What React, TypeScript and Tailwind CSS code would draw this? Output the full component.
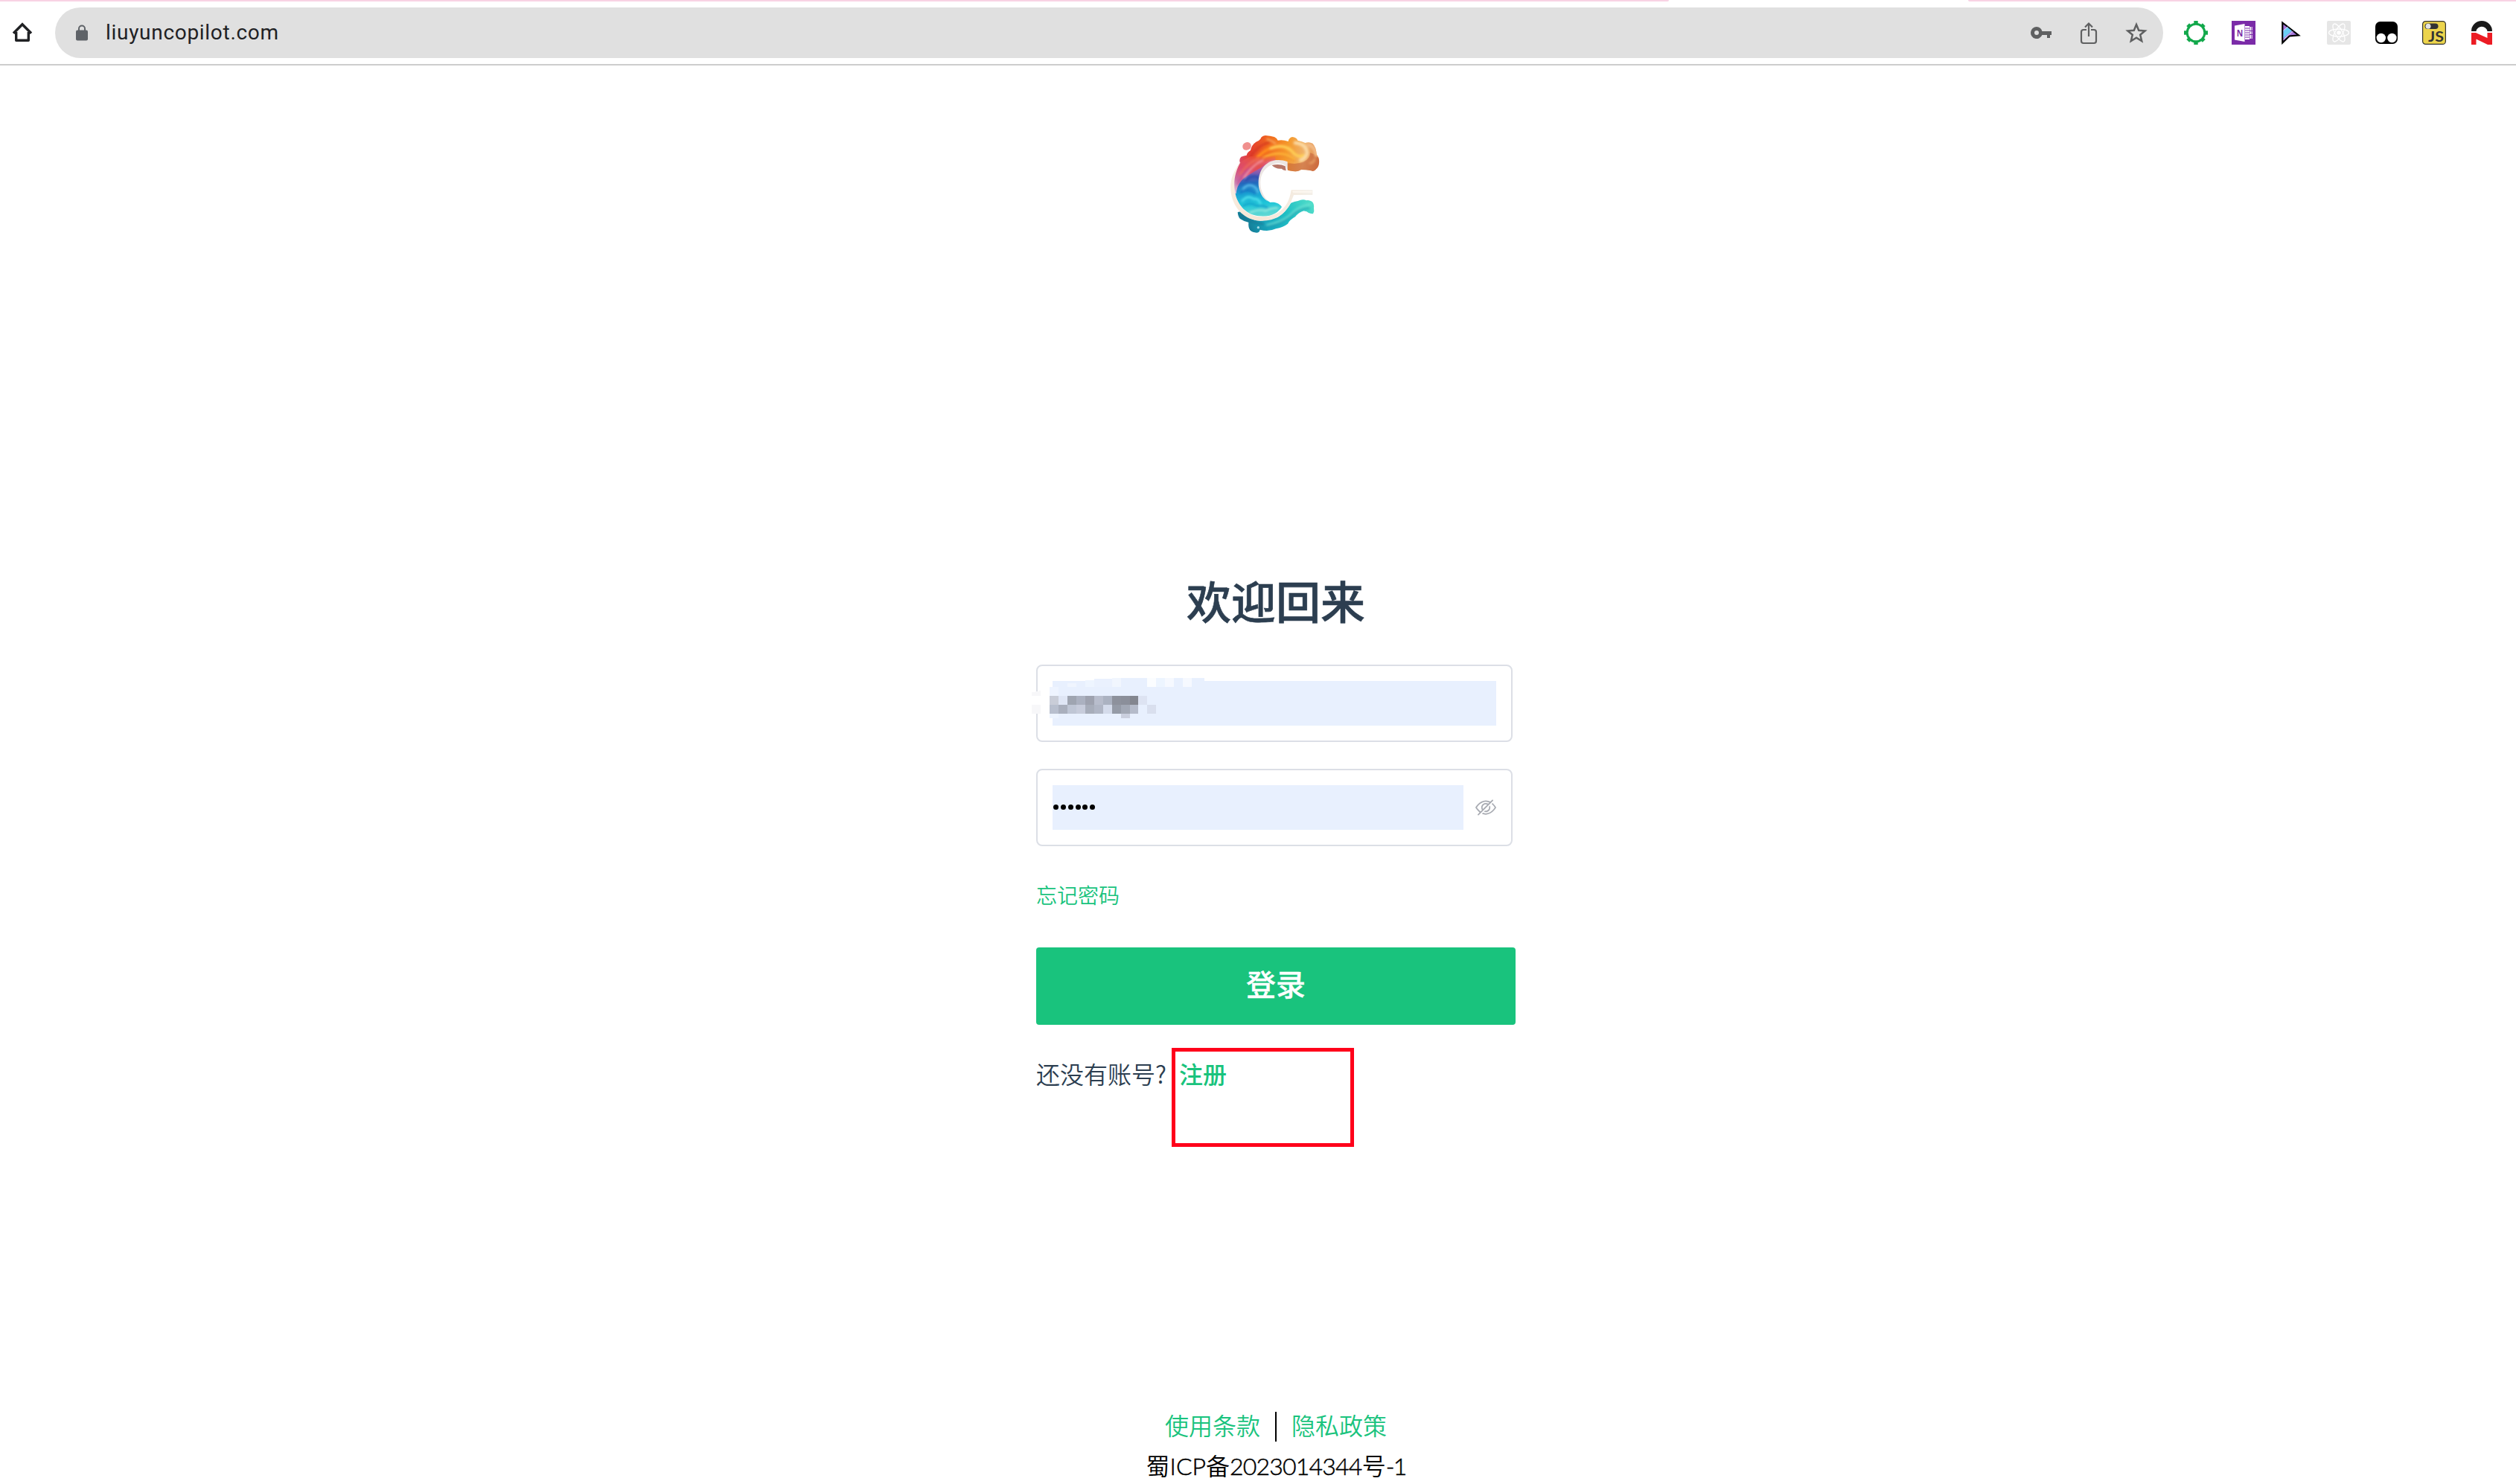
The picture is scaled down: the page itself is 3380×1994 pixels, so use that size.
import React from "react";

const CJK = "font-['Noto_Sans_CJK_SC',sans-serif]";

function Logo() {
  return (
    <svg className="block h-[170px] w-[170px]" viewBox="0 0 510 510">
      <defs>
        <linearGradient id="fire" x1="105" y1="130" x2="427" y2="180" gradientUnits="userSpaceOnUse">
          <stop offset="0" stopColor="#d94a6c" />
          <stop offset=".14" stopColor="#e5402f" />
          <stop offset=".34" stopColor="#f0681c" />
          <stop offset=".58" stopColor="#f59a2c" />
          <stop offset=".8" stopColor="#efb36c" />
          <stop offset="1" stopColor="#dd8147" />
        </linearGradient>
        <linearGradient id="body" x1="170" y1="150" x2="190" y2="400" gradientUnits="userSpaceOnUse">
          <stop offset="0" stopColor="#ee5a4d" stopOpacity="0" />
          <stop offset=".13" stopColor="#d8619c" />
          <stop offset=".3" stopColor="#6a5bb5" />
          <stop offset=".42" stopColor="#2268bd" />
          <stop offset=".58" stopColor="#1a9fd2" />
          <stop offset=".76" stopColor="#1fc6d8" />
          <stop offset="1" stopColor="#6fdcd2" />
        </linearGradient>
        <linearGradient id="rose" x1="190" y1="130" x2="95" y2="300" gradientUnits="userSpaceOnUse">
          <stop offset="0" stopColor="#f0562e" stopOpacity="0" />
          <stop offset=".1" stopColor="#ee522f" stopOpacity=".2" />
          <stop offset=".3" stopColor="#e44f50" />
          <stop offset=".5" stopColor="#dc4a6e" />
          <stop offset=".75" stopColor="#c86aa0" />
          <stop offset="1" stopColor="#d9c3de" />
        </linearGradient>
        <linearGradient id="wave" x1="390" y1="330" x2="150" y2="450" gradientUnits="userSpaceOnUse">
          <stop offset="0" stopColor="#4fdcc9" />
          <stop offset=".4" stopColor="#20bfc4" />
          <stop offset=".75" stopColor="#1aa6bd" />
          <stop offset="1" stopColor="#147e98" />
        </linearGradient>
        <linearGradient id="cream" x1="80" y1="250" x2="320" y2="400" gradientUnits="userSpaceOnUse">
          <stop offset="0" stopColor="#f8ecdf" />
          <stop offset=".6" stopColor="#f6e6d6" />
          <stop offset="1" stopColor="#f3efe8" />
        </linearGradient>
        <filter id="soft" x="-10%" y="-10%" width="120%" height="120%">
          <feGaussianBlur stdDeviation="4" />
        </filter>
        <clipPath id="inner">
          <path d="M112 172C76 214 76 270 90 312C112 368 150 392 200 392C240 392 262 376 276 354C262 334 240 334 230 336C200 322 184 284 184 254C188 214 214 182 250 172L250 150L150 150Z" />
        </clipPath>
        <clipPath id="crown">
          <path d="M108 178q-6-16 4-26 12-4 22-6 2-12 16-20 4-22 22-34 12-4 18-12 4-12 20-14 20 2 36 6 12 6 14 14 20-4 42 4 2-14 16-18 18 2 22 14 18 4 30 10 16-6 30 2 14 14 16 44 14 18 10 36-2 16-12 24-8 12-20 6-22-4-40-4-14 10-34 6-10-2-20-4-8-36-46-40-40 0-66 26-40 10-80 4z" />
        </clipPath>
      </defs>
      <path
        fill="url(#wave)"
        d="M98 376q2 18 10 26 14 10 34 14-2 20 6 32 10 10 26 10 12 0 14-12 34 10 64-4 30-6 48-20 8-16 30-28 14-18 34-24 14 2 20 8 10 4 18 4 6-10 3-24 2-18-8-26-14-8-22-4-14-8-34 2-14 2-28 8-20 36-54 58-34 12-70 14-40-2-68-30-14-10-23-4z"
      />
      <g filter="url(#soft)" fill="none" strokeLinecap="round">
        <path stroke="#12708e" strokeWidth="9" opacity=".6" d="M108 388q50 34 92 34" />
        <path stroke="#7fe8d8" strokeWidth="6" opacity=".7" d="M216 426q76-16 108-54 30-24 66-28" />
        <path stroke="#1494ac" strokeWidth="7" opacity=".6" d="M206 436q70-8 118-54 34-24 62-22" />
      </g>
      <circle cx="181" cy="437" r="5" fill="#a5dce6" />
      <path fill="#f0908e" d="M118 113q-1-12 9-17 10-6 18-1 9 5 7 16-2 12-17 14-15 1-17-12z" />
      <g clipPath="url(#crown)">
        <path fill="url(#fire)" d="M90 50h350v180H90z" />
        <path fill="#bc5436" d="M236 178q22-8 52 2l20-2q28 6 56-6 26-12 26-36 34 10 40 34v50H240z" opacity=".5" />
        <g filter="url(#soft)" fill="none" strokeLinecap="round">
          <path stroke="#cf2c1c" strokeWidth="11" opacity=".6" d="M150 150q30-44 74-56" />
          <path stroke="#ff8f1f" strokeWidth="12" d="M178 154q42-44 100-46" />
          <path stroke="#ffcf55" strokeWidth="11" d="M232 118q60-24 96 24 20 14 36 4" />
          <path stroke="#e5701f" strokeWidth="7" opacity=".8" d="M186 164q58-46 140 2" />
          <path stroke="#ffb739" strokeWidth="8" d="M200 158q62-40 126 4" />
          <path stroke="#fbd9a2" strokeWidth="14" d="M330 96q46 4 48 42-6 22-26 28" />
          <path stroke="#f3bb86" strokeWidth="14" d="M384 104q28 8 30 42" />
          <path stroke="#e59b60" strokeWidth="9" d="M390 178q14-2 18-16" />
          <path stroke="#fbb26a" strokeWidth="6" d="M216 80q20 6 34 18" />
        </g>
      </g>
      <g clipPath="url(#inner)">
        <path fill="url(#body)" d="M70 140h240v270H70z" />
        <path fill="url(#rose)" d="M108 150Q76 230 80 300l12 0q4-42 34-64 38-24 66-40 30-24 60-30v-30z" />
        <g filter="url(#soft)" fill="none" strokeLinecap="round">
          <path stroke="#f6b3c1" strokeWidth="5" d="M124 236q34-52 76-70" />
          <path stroke="#ed6f59" strokeWidth="8" opacity=".8" d="M108 222q34-50 76-62" />
          <path stroke="#ba4a98" strokeWidth="9" opacity=".6" d="M98 262q14-34 44-60" />
          <path stroke="#2a4fae" strokeWidth="14" opacity=".85" d="M132 246q24-22 50-10" />
          <path stroke="#5dc0ee" strokeWidth="8" d="M120 280q22-22 44-8 12 8 16 22" />
          <path stroke="#1879c6" strokeWidth="9" d="M110 296q26-20 58 2" />
          <path stroke="#4ee0ec" strokeWidth="9" d="M116 330q24-26 46-8 18-4 28 18" />
          <path stroke="#14a5cc" strokeWidth="8" d="M120 350q30-18 54 0 28-6 44 8" />
          <path stroke="#9cebdd" strokeWidth="7" d="M146 378q36-16 64-8 26-12 48-12" />
        </g>
      </g>
      <path
        fill="url(#cream)"
        d="M110 174C74 216 62 262 74 312C92 376 138 410 196 410C250 410 288 384 308 344C316 328 320 316 324 306H400V286H314C306 330 296 346 278 364C256 384 230 394 200 394C148 394 110 366 92 314C78 266 84 216 110 174Z"
      />
      <path fill="#fffaf4" opacity=".8" d="M318 290h80v6h-76z" />
      <path
        fill="#ece6e3"
        d="M299 210V172C262 158 228 166 206 188C184 210 178 250 184 278C190 304 202 322 220 332C198 306 188 280 190 250C192 216 212 192 240 182C262 176 280 178 292 190Z"
      />
      <path fill="#9f4a35" opacity=".75" d="M236 186q30-8 54 4l3 18q-12-2-18-8-24 2-39-14z" />
    </svg>
  );
}

function KeyIcon() {
  return (
    <svg className="h-8 w-8" viewBox="0 0 32 32" fill="#5f6061">
      <path
        fillRule="evenodd"
        d="M10 11a8 8 0 1 0 7.400 11H24v4h4v-4h2v-5H17.400A8 8 0 0 0 10 11zm0 5a3 3 0 1 1 0 6 3 3 0 0 1 0-6z"
        transform="translate(0 -3)"
      />
    </svg>
  );
}

function ShareIcon() {
  return (
    <svg className="h-8 w-8" viewBox="0 0 32 32" fill="none" stroke="#5f6061" strokeWidth="2.200">
      <path d="M13 12H9q-3 0-3 3v12q0 3 3 3h14q3 0 3-3V15q0-3-3-3h-4M16 21V4M11 8.500l5-5 5 5" />
    </svg>
  );
}

function StarIcon() {
  return (
    <svg className="h-8 w-8" viewBox="0 0 32 32" fill="none" stroke="#5f6061" strokeWidth="2.500">
      <path d="M16 5l3.200 7.700 8.400.7-6.400 5.400 2 8.200L16 22.600 8.800 27l2-8.200-6.400-5.400 8.400-.7z" />
    </svg>
  );
}

function Extensions() {
  return (
    <div className="flex items-center gap-8">
      <svg className="h-8 w-8" viewBox="0 0 32 32">
        <g fill="#12a84b">
          {[0, 45, 90, 135].map((a) => (
            <rect key={a} x="13.300" y={a % 90 ? 0.7 : 0} width="5.400" height={a % 90 ? 30.6 : 32} transform={`rotate(${a} 16 16)`} />
          ))}
          <circle cx="16" cy="16" r="13.300" />
        </g>
        <circle cx="16" cy="16" r="10.300" fill="#fff" />
      </svg>
      <svg className="h-8 w-8" viewBox="0 0 32 32">
        <path fill="#7b2ba8" d="M0 0h32v32H0z" />
        <path fill="#fff" d="M4 6.500 17.500 4v24L4 25.500z" />
        <path fill="#fff" d="M18 7h6v18h-6zM24.500 8H28v5h-3.500zM24.500 14H28v4h-3.500zM24.500 19H28v5h-3.500z" />
        <path stroke="#7b2ba8" strokeWidth="1" d="M18 10h6M18 13h6M18 16h6M18 19h6M18 22h6M26.800 8v16" />
        <text x="6.700" y="20.500" fontSize="12.500" fontWeight="700" fontFamily="Open Sans" fill="#7b2ba8" textLength="8.500" lengthAdjust="spacingAndGlyphs">N</text>
      </svg>
      <svg className="h-8 w-8" viewBox="0 0 32 32">
        <path fill="#a678dc" stroke="#000" strokeWidth="2.200" d="M4.300 2.500 26 19.300 13.500 20.500 4.300 29.500z" />
        <path fill="#6ccff6" d="M5.500 13 11 8.500l6 5L5.500 23.500z" />
        <path stroke="#e3d4f7" strokeWidth="1" fill="none" d="M5.500 13 11.500 8M5.500 25 18.500 14" />
      </svg>
      <svg className="h-8 w-8" viewBox="0 0 32 32">
        <rect width="32" height="32" rx="2" fill="#e6e6e6" />
        <g fill="none" stroke="#fff" strokeWidth="1.300">
          <ellipse cx="16" cy="16" rx="13.500" ry="5" />
          <ellipse cx="16" cy="16" rx="13.500" ry="5" transform="rotate(60 16 16)" />
          <ellipse cx="16" cy="16" rx="13.500" ry="5" transform="rotate(120 16 16)" />
        </g>
        <circle cx="16" cy="16" r="2.800" fill="#fff" />
      </svg>
      <svg className="h-8 w-8" viewBox="0 0 32 32">
        <rect x="1" y="1" width="30" height="30" rx="6.500" />
        <circle cx="8.800" cy="23" r="6.200" fill="#fff" />
        <circle cx="23.400" cy="23" r="6.200" fill="#fff" />
      </svg>
      <svg className="h-8 w-8" viewBox="0 0 32 32">
        <rect x=".6" y=".6" width="30.800" height="30.800" rx="4" fill="#ecd44c" stroke="#333" strokeWidth="1.200" />
        <rect x="3.500" y="3.500" width="18" height="7.500" rx="3.750" fill="#333" />
        <circle cx="8" cy="7.200" r="3.500" fill="#e4e4e4" />
        <text x="8" y="28" fontSize="19" fontWeight="700" fontFamily="Lato" fill="#333" textLength="21" lengthAdjust="spacingAndGlyphs">JS</text>
      </svg>
      <svg className="h-8 w-8" viewBox="0 0 32 32">
        <path fill="#1a1a1a" d="M2 14a14 14 0 0 1 28 0h-6.500a7.600 7.600 0 0 0-15 0z" />
        <path fill="#ec1c24" d="M2 16h6l15.500 7V16H30v16h-6L8.500 24.500V32H2z" />
      </svg>
    </div>
  );
}

function BrowserBar() {
  return (
    <header className="flex h-[88px] flex-col border-b-2 border-[#cdcdcd]">
      <div className="flex h-[2px] justify-between">
        <div className="w-[2242px] rounded-br-[2px] bg-[#f8d3e4]" />
        <div className="w-[736px] rounded-bl-[2px] bg-[#f8d3e4]" />
      </div>
      <div className="flex h-[84px] items-center pl-3.5">
        <svg className="h-8 w-8" viewBox="0 0 32 32" fill="none" stroke="#202124" strokeWidth="3.400">
          <path strokeLinejoin="round" d="M7.700 15v11.300h16.600V15" />
          <path d="M4 16.700 16 4.700l12 12" />
        </svg>
        <div className="ml-7 flex h-[68px] w-[2832px] items-center rounded-full bg-[#e0e0e0] pl-7">
          <svg className="h-[22px] w-4" viewBox="0 0 16 22">
            <rect y="7.500" width="16" height="14" rx="2" fill="#5f6368" />
            <path d="M4 9V5.500a4 4 0 0 1 8 0V9" fill="none" stroke="#5f6368" strokeWidth="2" />
          </svg>
          <span className="ml-[24px] font-['Roboto',sans-serif] text-[28px] leading-8 tracking-[0.700px] text-[#202124]">
            liuyuncopilot.com
          </span>
          <div className="ml-auto flex gap-8 pr-5">
            <KeyIcon />
            <ShareIcon />
            <StarIcon />
          </div>
        </div>
        <div className="ml-7">
          <Extensions />
        </div>
      </div>
    </header>
  );
}

/* Pixelated cells that hide the account name: x, y, width, height, colour */
const CELLS: [number, number, number, number, string][] = [
  [0, 36, 12, 12, "#f7f7f9"],
  [24, 12, 12, 12, "#eef4ff"],
  [48, 7, 12, 5, "#f0f5fe"],
  [72, 3, 12, 9, "#eef5ff"],
  [84, 1, 24, 11, "#eaf1fe"],
  [108, 0, 12, 12, "#f1f6fe"],
  [120, 0, 35, 12, "#e8f0fe"],
  [155, 0, 12, 12, "#fbfdff"],
  [167, 0, 12, 12, "#edf5ff"],
  [179, 0, 12, 12, "#f6f9ff"],
  [191, 0, 12, 12, "#e8f0fe"],
  [203, 0, 12, 12, "#f6f9ff"],
  [215, 0, 17, 12, "#e8f0fe"],
  [24, 24, 12, 12, "#c9cdd8"],
  [36, 24, 12, 12, "#dfe6f5"],
  [48, 24, 12, 12, "#9fa5b1"],
  [60, 24, 12, 12, "#abb1c0"],
  [72, 24, 12, 12, "#9ea2af"],
  [84, 24, 12, 12, "#b8bdcc"],
  [96, 24, 12, 12, "#abb2c1"],
  [108, 24, 12, 12, "#8d919c"],
  [120, 24, 12, 12, "#8b8f9a"],
  [132, 24, 11, 12, "#83868f"],
  [143, 24, 12, 12, "#dde3f2"],
  [24, 36, 12, 12, "#b8bfce"],
  [36, 36, 12, 12, "#a9afbd"],
  [48, 36, 12, 12, "#bfc6d5"],
  [60, 36, 12, 12, "#c7ccdb"],
  [72, 36, 12, 12, "#a7adba"],
  [84, 36, 12, 12, "#b0b6c5"],
  [96, 36, 12, 12, "#d4dbeb"],
  [108, 36, 12, 12, "#959ba7"],
  [120, 36, 12, 12, "#a2a8b5"],
  [132, 36, 11, 12, "#b5bbca"],
  [155, 36, 12, 12, "#d9dfee"],
  [24, 48, 12, 6, "#edf4ff"],
  [120, 48, 12, 6, "#cacfde"],
];

function Mosaic() {
  return (
    <svg className="absolute -left-2 top-4 h-[60px] w-[240px]" viewBox="0 0 240 60" shapeRendering="crispEdges">
      <path fill="#f7f7f9" d="M0 19.500 12 17v7H0z" />
      {CELLS.map(([x, y, w, h, c]) => (
        <rect key={`${x}-${y}`} x={x} y={y} width={w} height={h} fill={c} />
      ))}
      <path fill="#fff" d="M6 24h6v12H6z" />
    </svg>
  );
}

function HiddenEye() {
  return (
    <svg className="h-7 w-7" viewBox="0 0 1024 1024" fill="#a8abb2">
      <path d="M876.800 156.800c0-9.600-3.200-16-9.600-22.400-6.400-6.400-12.800-9.600-22.400-9.600-9.600 0-16 3.200-22.400 9.600L736 220.800c-64-32-137.600-51.200-224-60.800-160 16-288 73.600-377.600 176C44.800 438.400 0 496 0 512s48 73.600 134.400 176c22.400 25.600 44.800 48 73.600 67.200l-86.400 89.600c-6.400 6.400-9.600 12.800-9.600 22.400 0 9.600 3.200 16 9.600 22.400 6.400 6.400 12.800 9.600 22.400 9.600 9.600 0 16-3.200 22.400-9.600l704-710.400c3.200-6.400 6.400-12.800 6.400-22.400Zm-646.400 528c-76.800-70.400-128-128-153.600-172.800 28.800-48 80-105.600 153.600-172.800C304 272 400 230.400 512 224c64 3.200 124.800 19.200 176 44.800l-54.400 54.400C598.400 300.800 560 288 512 288c-64 0-115.200 22.400-160 64s-64 96-64 160c0 48 12.800 89.600 35.200 124.800L256 707.200c-9.600-6.400-19.200-16-25.600-22.400Zm140.800-96c-12.800-22.400-19.200-48-19.200-76.800 0-44.800 16-83.200 48-112 32-28.800 67.200-48 112-48 28.800 0 54.400 6.400 73.600 19.200L371.200 588.800ZM889.600 336c-12.800-16-28.800-28.800-41.600-41.600l-48 48c73.600 67.200 124.800 124.800 150.400 169.600-28.800 48-80 105.600-153.600 172.800-73.600 67.200-172.800 108.800-284.800 115.200-51.200-3.200-99.200-12.800-140.800-28.800l-48 48c57.600 22.400 118.400 38.400 188.800 44.800 160-16 288-73.600 377.600-176C979.200 585.600 1024 528 1024 512s-48-73.600-134.400-176Z" />
      <path d="M511.998 672c-12.800 0-25.600-3.200-38.400-6.400l-51.200 51.200c28.800 12.800 57.600 19.200 89.600 19.200 64 0 115.200-22.400 160-64 41.600-41.600 64-96 64-160 0-32-6.400-64-19.200-89.600l-51.200 51.200c3.200 12.800 6.400 25.600 6.400 38.400 0 44.800-16 83.200-48 112-32 28.800-67.200 48-112 48Z" />
    </svg>
  );
}

export default function App() {
  return (
    <div className={`flex h-[1994px] w-[3380px] flex-col overflow-hidden bg-white ${CJK}`}>
      <BrowserBar />
      <main className="ml-[1392px] flex w-[644px] grow flex-col">
        <div className="mt-[72px] pl-[238px]">
          <Logo />
        </div>
        <h1 className="mt-[431px] text-center text-[60px] leading-[90px] font-medium text-[#2c3e50] [-webkit-text-stroke:0.600px_#2c3e50]">
          欢迎回来
        </h1>
        <div className="relative mt-[42px] h-[104px] w-[640px] rounded-lg border-2 border-[#dcdfe6] px-5 py-5">
          <div className="h-[60px] bg-[#e8f0fe]" />
          <Mosaic />
        </div>
        <div className="mt-9 flex h-[104px] w-[640px] items-center rounded-lg border-2 border-[#dcdfe6] px-5">
          <div className="flex h-[60px] w-[552px] items-center gap-[2.800px] bg-[#e8f0fe] pl-[1.200px]">
            {[0, 1, 2, 3, 4, 5].map((i) => (
              <span key={i} className="-mt-0.5 h-[7px] w-[7px] rounded-full bg-black" />
            ))}
          </div>
          <div className="ml-auto">
            <HiddenEye />
          </div>
        </div>
        <a className="mt-[44px] text-[28px] leading-[42px] font-[350] text-[#19c37d]">忘记密码</a>
        <button className="mt-[50px] h-[104px] w-[644px] rounded bg-[#19c37d] pb-2 text-[40px] font-medium text-white [-webkit-text-stroke:0.300px_white]">
          登录
        </button>
        <div className="relative mt-[41px] flex h-12 items-center text-[32px] leading-[48px] font-[350] text-[#2c3e50]">
          <span className="w-[192px]">还没有账号?</span>
          <a className="font-medium text-[#19c37d]">注册</a>
          <div className="absolute left-[182px] -top-2.5 h-[133px] w-[245px] border-[5px] border-[#ff001a]" />
        </div>
        <footer className="mt-auto flex flex-col items-center text-[32px] leading-[48px] font-[350]">
          <div className="flex items-center text-[#19c37d]">
            <a>使用条款</a>
            <span className="mx-5 mt-1.5 h-10 w-[2px] bg-black" />
            <a>隐私政策</a>
          </div>
          <p className="mt-1.5 text-black">
            蜀
            <span className="font-['Lato',sans-serif] font-light [-webkit-text-stroke:0.500px_black]">ICP</span>
            备
            <span className="font-['Lato',sans-serif] font-light tracking-[-0.800px] [-webkit-text-stroke:0.500px_black]">2023014344</span>
            号
            <span className="font-['Lato',sans-serif] font-light tracking-[-1.800px] [-webkit-text-stroke:0.500px_black]">-1</span>
          </p>
        </footer>
      </main>
    </div>
  );
}
